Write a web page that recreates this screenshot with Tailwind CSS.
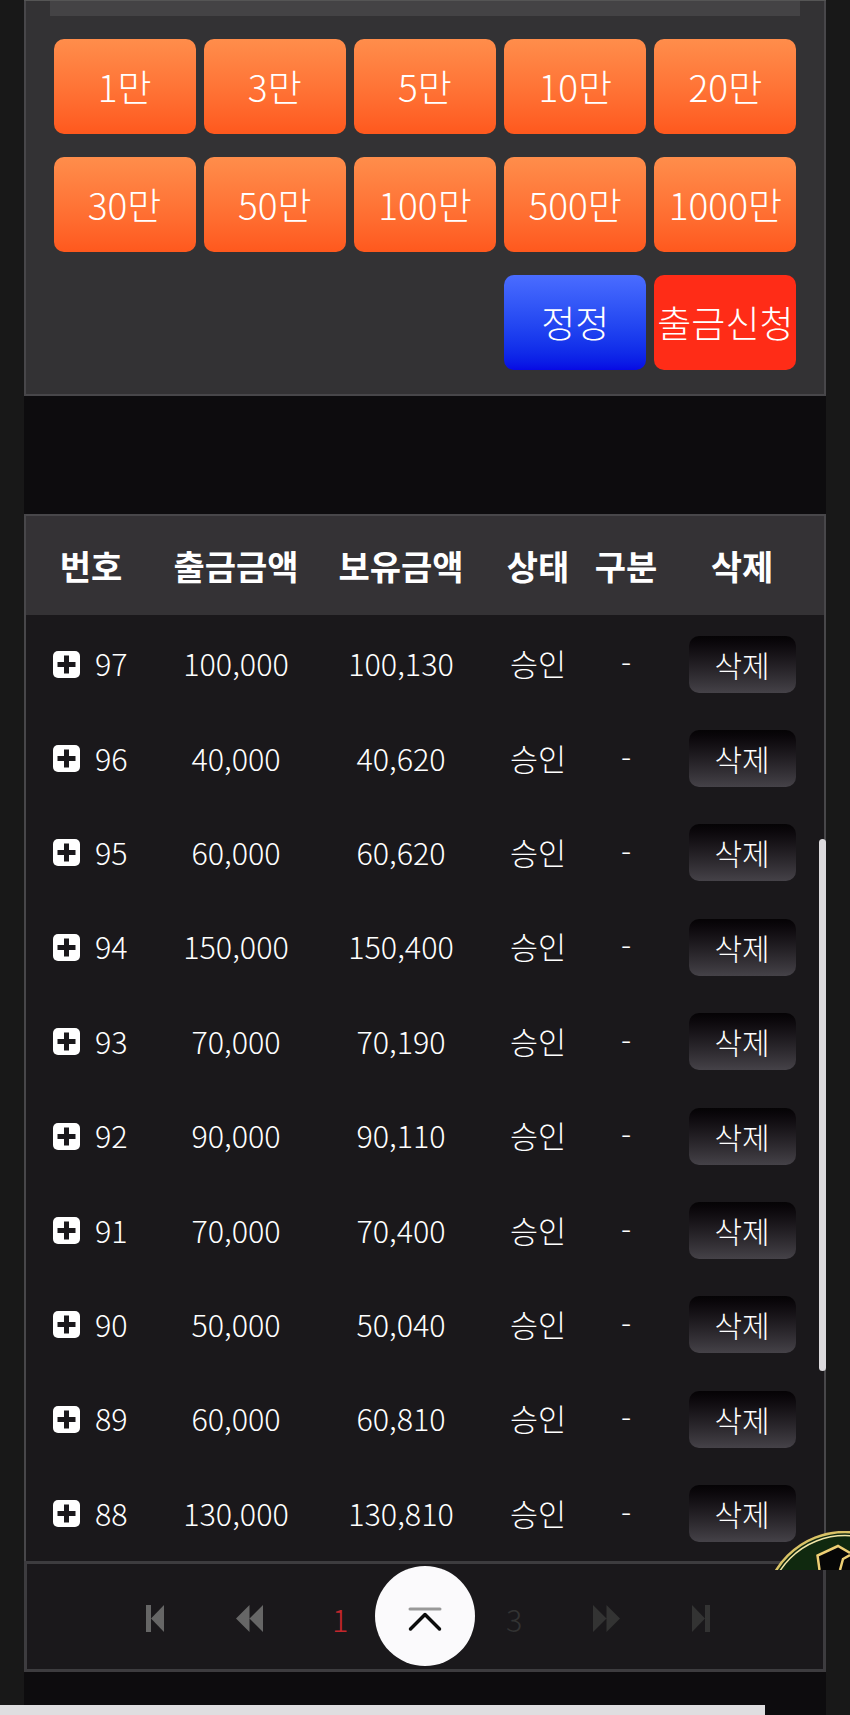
<!DOCTYPE html>
<html lang="ko">
<head>
    <meta charset="UTF-8">
    <meta name="viewport" content="width=device-width, initial-scale=1.0">
    <title>출금신청</title>
    <script src="https://cdn.jsdelivr.net/npm/@tailwindcss/browser@4"></script>
</head>
<body class="relative h-[1715px] overflow-hidden bg-[#dfdee0] font-['Noto_Sans_CJK_KR','Noto_Sans',sans-serif] text-white">
    <div class="h-[1705px] bg-[#181818] px-6">
        <div class="h-full border-t border-[#555] bg-[#0d0c0e]">
            <!-- amount panel -->
            <section class="h-[395px] border-x-2 border-b-2 border-[#48474a] bg-[#333234]">
                <div class="mx-6 h-[15px] bg-[#444345]"></div>
                <div class="grid grid-cols-5 gap-x-[8px] gap-y-[23px] pl-[27.5px] pr-[27.5px] pt-[23px] text-[37px] font-light">
                    <button class="h-[95px] rounded-[10px] bg-linear-to-b from-[#ff8d4b] to-[#ff581d]">1만</button>
                    <button class="h-[95px] rounded-[10px] bg-linear-to-b from-[#ff8d4b] to-[#ff581d]">3만</button>
                    <button class="h-[95px] rounded-[10px] bg-linear-to-b from-[#ff8d4b] to-[#ff581d]">5만</button>
                    <button class="h-[95px] rounded-[10px] bg-linear-to-b from-[#ff8d4b] to-[#ff581d]">10만</button>
                    <button class="h-[95px] rounded-[10px] bg-linear-to-b from-[#ff8d4b] to-[#ff581d]">20만</button>
                    <button class="h-[95px] rounded-[10px] bg-linear-to-b from-[#ff8d4b] to-[#ff581d]">30만</button>
                    <button class="h-[95px] rounded-[10px] bg-linear-to-b from-[#ff8d4b] to-[#ff581d]">50만</button>
                    <button class="h-[95px] rounded-[10px] bg-linear-to-b from-[#ff8d4b] to-[#ff581d]">100만</button>
                    <button class="h-[95px] rounded-[10px] bg-linear-to-b from-[#ff8d4b] to-[#ff581d]">500만</button>
                    <button class="h-[95px] rounded-[10px] bg-linear-to-b from-[#ff8d4b] to-[#ff581d]">1000만</button>
                    <button class="col-start-4 h-[95px] rounded-[10px] bg-linear-to-b from-[#4a6cff] to-[#0808e4]">정정</button>
                    <button class="h-[95px] whitespace-nowrap rounded-[10px] bg-[#ff2c17]">출금신청</button>
                </div>
            </section>

            <!-- withdraw list -->
            <section class="relative mt-[118px] border-x-2 border-t-2 border-[#48474a] bg-[#1a181b]">
                <div class="grid h-[99px] grid-cols-[130px_160px_170px_104px_72px_1fr] items-center bg-[#343235] text-center text-[34px] font-bold">
                    <div>번호</div>
                    <div>출금금액</div>
                    <div>보유금액</div>
                    <div>상태</div>
                    <div>구분</div>
                    <div class="pr-[2px]">삭제</div>
                </div>
                <div class="pt-[2px] text-center text-[30.500px] font-light">
                    <div class="grid h-[94.4px] grid-cols-[130px_160px_170px_104px_72px_1fr] items-center">
                        <div class="flex items-center gap-[15px] pl-[27px]"><svg class="h-[27px] w-[27px]" viewBox="0 0 27 27"><rect width="27" height="27" rx="5" fill="#fff"/><path d="M13.500 4.500v18M4.500 13.500h18" stroke="#1a181b" stroke-width="5"/></svg><span>97</span></div>
                        <div>100,000</div><div>100,130</div><div>승인</div><div>-</div>
                        <div class="flex justify-center pr-[2px]"><button class="h-[57px] w-[107px] rounded-[10px] bg-linear-to-b from-[#050305] to-[#454248] text-[30px]">삭제</button></div>
                    </div>
                    <div class="grid h-[94.4px] grid-cols-[130px_160px_170px_104px_72px_1fr] items-center">
                        <div class="flex items-center gap-[15px] pl-[27px]"><svg class="h-[27px] w-[27px]" viewBox="0 0 27 27"><rect width="27" height="27" rx="5" fill="#fff"/><path d="M13.500 4.500v18M4.500 13.500h18" stroke="#1a181b" stroke-width="5"/></svg><span>96</span></div>
                        <div>40,000</div><div>40,620</div><div>승인</div><div>-</div>
                        <div class="flex justify-center pr-[2px]"><button class="h-[57px] w-[107px] rounded-[10px] bg-linear-to-b from-[#050305] to-[#454248] text-[30px]">삭제</button></div>
                    </div>
                    <div class="grid h-[94.4px] grid-cols-[130px_160px_170px_104px_72px_1fr] items-center">
                        <div class="flex items-center gap-[15px] pl-[27px]"><svg class="h-[27px] w-[27px]" viewBox="0 0 27 27"><rect width="27" height="27" rx="5" fill="#fff"/><path d="M13.500 4.500v18M4.500 13.500h18" stroke="#1a181b" stroke-width="5"/></svg><span>95</span></div>
                        <div>60,000</div><div>60,620</div><div>승인</div><div>-</div>
                        <div class="flex justify-center pr-[2px]"><button class="h-[57px] w-[107px] rounded-[10px] bg-linear-to-b from-[#050305] to-[#454248] text-[30px]">삭제</button></div>
                    </div>
                    <div class="grid h-[94.4px] grid-cols-[130px_160px_170px_104px_72px_1fr] items-center">
                        <div class="flex items-center gap-[15px] pl-[27px]"><svg class="h-[27px] w-[27px]" viewBox="0 0 27 27"><rect width="27" height="27" rx="5" fill="#fff"/><path d="M13.500 4.500v18M4.500 13.500h18" stroke="#1a181b" stroke-width="5"/></svg><span>94</span></div>
                        <div>150,000</div><div>150,400</div><div>승인</div><div>-</div>
                        <div class="flex justify-center pr-[2px]"><button class="h-[57px] w-[107px] rounded-[10px] bg-linear-to-b from-[#050305] to-[#454248] text-[30px]">삭제</button></div>
                    </div>
                    <div class="grid h-[94.4px] grid-cols-[130px_160px_170px_104px_72px_1fr] items-center">
                        <div class="flex items-center gap-[15px] pl-[27px]"><svg class="h-[27px] w-[27px]" viewBox="0 0 27 27"><rect width="27" height="27" rx="5" fill="#fff"/><path d="M13.500 4.500v18M4.500 13.500h18" stroke="#1a181b" stroke-width="5"/></svg><span>93</span></div>
                        <div>70,000</div><div>70,190</div><div>승인</div><div>-</div>
                        <div class="flex justify-center pr-[2px]"><button class="h-[57px] w-[107px] rounded-[10px] bg-linear-to-b from-[#050305] to-[#454248] text-[30px]">삭제</button></div>
                    </div>
                    <div class="grid h-[94.4px] grid-cols-[130px_160px_170px_104px_72px_1fr] items-center">
                        <div class="flex items-center gap-[15px] pl-[27px]"><svg class="h-[27px] w-[27px]" viewBox="0 0 27 27"><rect width="27" height="27" rx="5" fill="#fff"/><path d="M13.500 4.500v18M4.500 13.500h18" stroke="#1a181b" stroke-width="5"/></svg><span>92</span></div>
                        <div>90,000</div><div>90,110</div><div>승인</div><div>-</div>
                        <div class="flex justify-center pr-[2px]"><button class="h-[57px] w-[107px] rounded-[10px] bg-linear-to-b from-[#050305] to-[#454248] text-[30px]">삭제</button></div>
                    </div>
                    <div class="grid h-[94.4px] grid-cols-[130px_160px_170px_104px_72px_1fr] items-center">
                        <div class="flex items-center gap-[15px] pl-[27px]"><svg class="h-[27px] w-[27px]" viewBox="0 0 27 27"><rect width="27" height="27" rx="5" fill="#fff"/><path d="M13.500 4.500v18M4.500 13.500h18" stroke="#1a181b" stroke-width="5"/></svg><span>91</span></div>
                        <div>70,000</div><div>70,400</div><div>승인</div><div>-</div>
                        <div class="flex justify-center pr-[2px]"><button class="h-[57px] w-[107px] rounded-[10px] bg-linear-to-b from-[#050305] to-[#454248] text-[30px]">삭제</button></div>
                    </div>
                    <div class="grid h-[94.4px] grid-cols-[130px_160px_170px_104px_72px_1fr] items-center">
                        <div class="flex items-center gap-[15px] pl-[27px]"><svg class="h-[27px] w-[27px]" viewBox="0 0 27 27"><rect width="27" height="27" rx="5" fill="#fff"/><path d="M13.500 4.500v18M4.500 13.500h18" stroke="#1a181b" stroke-width="5"/></svg><span>90</span></div>
                        <div>50,000</div><div>50,040</div><div>승인</div><div>-</div>
                        <div class="flex justify-center pr-[2px]"><button class="h-[57px] w-[107px] rounded-[10px] bg-linear-to-b from-[#050305] to-[#454248] text-[30px]">삭제</button></div>
                    </div>
                    <div class="grid h-[94.4px] grid-cols-[130px_160px_170px_104px_72px_1fr] items-center">
                        <div class="flex items-center gap-[15px] pl-[27px]"><svg class="h-[27px] w-[27px]" viewBox="0 0 27 27"><rect width="27" height="27" rx="5" fill="#fff"/><path d="M13.500 4.500v18M4.500 13.500h18" stroke="#1a181b" stroke-width="5"/></svg><span>89</span></div>
                        <div>60,000</div><div>60,810</div><div>승인</div><div>-</div>
                        <div class="flex justify-center pr-[2px]"><button class="h-[57px] w-[107px] rounded-[10px] bg-linear-to-b from-[#050305] to-[#454248] text-[30px]">삭제</button></div>
                    </div>
                    <div class="grid h-[94.4px] grid-cols-[130px_160px_170px_104px_72px_1fr] items-center">
                        <div class="flex items-center gap-[15px] pl-[27px]"><svg class="h-[27px] w-[27px]" viewBox="0 0 27 27"><rect width="27" height="27" rx="5" fill="#fff"/><path d="M13.500 4.500v18M4.500 13.500h18" stroke="#1a181b" stroke-width="5"/></svg><span>88</span></div>
                        <div>130,000</div><div>130,810</div><div>승인</div><div>-</div>
                        <div class="flex justify-center pr-[2px]"><button class="h-[57px] w-[107px] rounded-[10px] bg-linear-to-b from-[#050305] to-[#454248] text-[30px]">삭제</button></div>
                    </div>
                </div>
                <!-- scrollbar -->
                <div class="absolute right-[-2px] top-[323px] h-[532px] w-[7px] rounded-full bg-[#dcdadd]"></div>
            </section>

            <!-- pagination -->
            <nav class="relative flex h-[111px] items-center border-[3px] border-[#3d3c3f] bg-[#1a181b] text-[30.500px] font-light">
                <svg class="absolute left-[119px] top-[41px] h-[27px] w-[18px]" viewBox="0 0 18 27" fill="#666"><rect width="5" height="27"/><path d="M18 0v27L5 13.500z"/></svg>
                <svg class="absolute left-[209px] top-[41px] h-[27px] w-[27px]" viewBox="0 0 27 27" fill="#666"><path d="M13.500 0v27L0 13.500zM27 0v27L13.500 13.500z"/></svg>
                <span class="absolute left-[305px] top-[33px] text-[#c4262c]">1</span>
                <span class="absolute left-[393px] top-[33px] text-[#333]">2</span>
                <span class="absolute left-[479px] top-[33px] text-[#333]">3</span>
                <svg class="absolute left-[566px] top-[41px] h-[27px] w-[27px]" viewBox="0 0 27 27" fill="#333"><path d="M0 0v27L13.500 13.500zM13.500 0v27L27 13.500z"/></svg>
                <svg class="absolute left-[665px] top-[41px] h-[27px] w-[18px]" viewBox="0 0 18 27" fill="#333"><path d="M0 0v27L13 13.500z"/><rect x="13" width="5" height="27"/></svg>
            </nav>
        </div>
    </div>

    <!-- back to top -->
    <button class="absolute left-[375px] top-[1566px] flex h-[100px] w-[100px] items-center justify-center rounded-full bg-[#fbfafc]">
        <svg class="h-[34px] w-[40px]" viewBox="0 0 40 34" fill="none" stroke-linecap="round" stroke-linejoin="round"><path d="M5 10h30" stroke="#999" stroke-width="3"/><path d="M5.500 30L20 15.500 34.500 30" stroke="#0c0c0c" stroke-width="3.500"/></svg>
    </button>

    <!-- floating badge, cut off by its frame -->
    <div class="absolute left-[775px] top-[1531px] h-[39px] w-[75px] overflow-hidden">
        <svg class="h-[39px] w-[75px]" viewBox="0 0 75 39"><circle cx="70" cy="82" r="81" fill="#10290f"/><circle cx="70" cy="82" r="81" fill="none" stroke="#d9c266" stroke-width="2.500"/><circle cx="70" cy="82" r="77.500" fill="none" stroke="#f3e7a8" stroke-width="1.500"/><path d="M43 39l-2-15 22-10 12 7v18z" fill="#060606"/><path d="M44.500 39l-2-14.500 20.500-9.500 12 7M65 39l3-11 7-4" fill="none" stroke="#edcf74" stroke-width="2.500"/></svg>
    </div>

    <!-- bottom bar: right part is page background -->
    <div class="absolute bottom-0 right-0 h-[10px] w-[85px] bg-[#0d0c0e]"></div>
    <div class="absolute bottom-0 right-0 h-[10px] w-[24px] bg-[#181818]"></div>
</body>
</html>
